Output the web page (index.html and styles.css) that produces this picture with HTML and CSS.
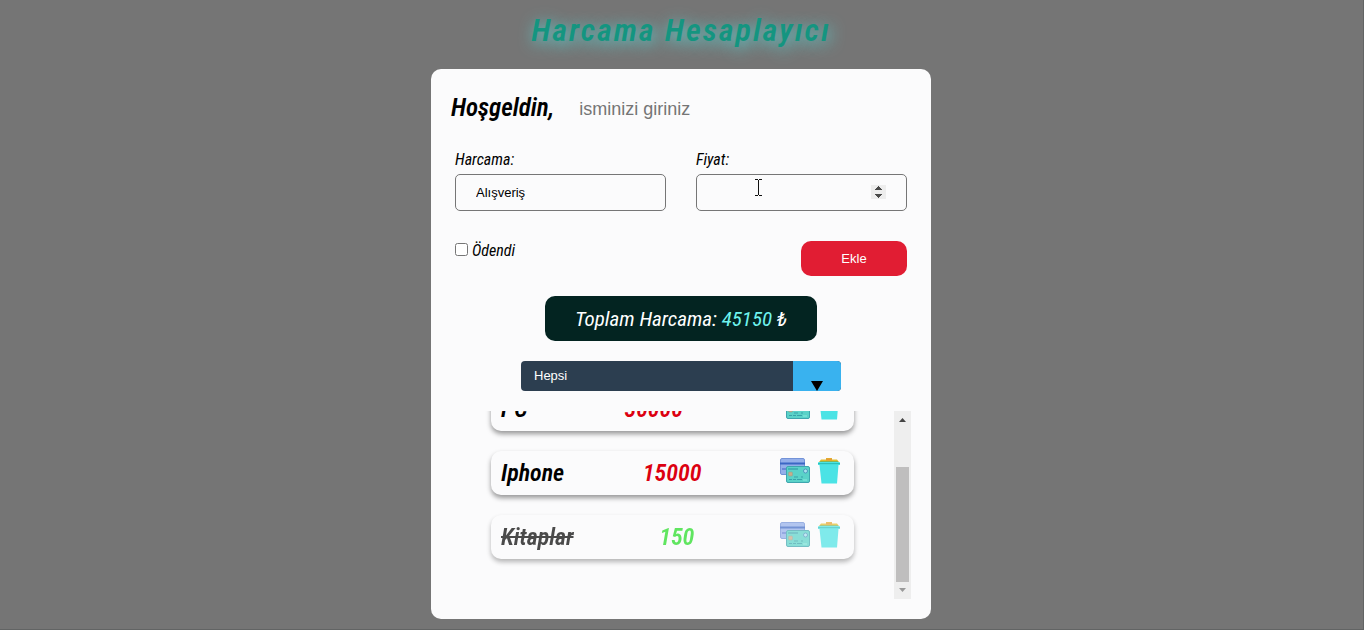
FILE: index.html
```html
<!DOCTYPE html>
<html lang="tr">
<head>
<meta charset="utf-8">
<title>Harcama Hesaplayıcı</title>
<meta name="viewport" content="width=device-width, initial-scale=1">
<link rel="stylesheet" href="styles.css">
</head>
<body>
<svg class="sprite" width="0" height="0" aria-hidden="true">
  <symbol id="cards" viewBox="0 0 30 26">
    <rect x=".5" y=".5" width="24" height="16" rx="1.500" fill="#94afea" stroke="#7393d8"/>
    <path d="M0 4.500h25v2H0z" fill="#3c66c4"/>
    <path d="M2 10h4v2H2z" fill="#6b87d6"/>
    <rect x="6.500" y="8.500" width="23" height="16" rx="1.500" fill="#5ad2c8" stroke="#3fa5ae"/>
    <path d="M8 11h10" stroke="#2f93a2"/>
    <rect x="8.500" y="14" width="4" height="4" rx="1" fill="#c9ab8a" stroke="#8fa596" stroke-width=".6"/>
    <circle cx="25.500" cy="13" r="2" fill="#a9e3ee" stroke="#4489b9" stroke-width=".8"/>
    <path d="M9 21.500h3m1 0h3m1 0h5M14 19h4m3 0h2" stroke="#38a3aa"/>
    <path d="M23 22h4" stroke="#8aeadf"/>
  </symbol>
  <symbol id="bin" viewBox="0 0 22 26">
    <path d="M8 0h6v1.500h5L21 4H1l2-2.500h5z" fill="#e2bd2b"/>
    <path d="M8 .5h6v2H8z" fill="#e59a35"/>
    <path d="M2.500 3h17L21 5H1z" fill="#83b45c"/>
    <path d="M0 5q0-1 1-1h20q1 0 1 1v2h-1.500L19 25.500H3.500L1.500 7H0z" fill="#4be3e5"/>
    <path d="M0 5h22v1.200H0z" fill="#2ac1bb"/>
  </symbol>
</svg>

<h1 class="title">Harcama Hesaplayıcı</h1>

<main class="card">
  <div class="welcome">
    <label class="welcome-text" for="name">Hoşgeldin,</label>
    <input class="name" id="name" type="text" placeholder="isminizi giriniz">
  </div>

  <form class="form">
    <div class="field">
      <label for="expense">Harcama:</label>
      <input class="text-box" id="expense" type="text" value="Alışveriş">
    </div>
    <div class="field">
      <label for="price">Fiyat:</label>
      <input class="text-box" id="price" type="number">
      <svg class="caret" width="7" height="17" viewBox="0 0 7 17" fill="none" stroke="#111" aria-hidden="true"><path d="M0 .5h3M4 .5h3M3.500 1v15M0 16.500h3M4 16.500h3"/></svg>
    </div>
    <div class="paid">
      <input id="paid" type="checkbox">
      <label for="paid">Ödendi</label>
    </div>
    <button class="add" type="button">Ekle</button>
  </form>

  <p class="total">Toplam Harcama: <span class="amount">45150</span> ₺</p>

  <div class="filter">
    <select class="filter-select" aria-label="Filtre">
      <option>Hepsi</option>
      <option>Ödendi</option>
      <option>Ödenmedi</option>
    </select>
  </div>

  <div class="scroller">
    <ul class="list">
      <li class="item">
        <span>PC</span><span class="cost">30000</span>
        <span class="actions">
          <button class="icon" type="button" aria-label="Öde"><svg width="30" height="26"><use href="#cards"/></svg></button>
          <button class="icon" type="button" aria-label="Sil"><svg width="22" height="26"><use href="#bin"/></svg></button>
        </span>
      </li>
      <li class="item">
        <span>Iphone</span><span class="cost">15000</span>
        <span class="actions">
          <button class="icon" type="button" aria-label="Öde"><svg width="30" height="26"><use href="#cards"/></svg></button>
          <button class="icon" type="button" aria-label="Sil"><svg width="22" height="26"><use href="#bin"/></svg></button>
        </span>
      </li>
      <li class="item done">
        <span class="struck">Kitaplar</span><span class="cost">150</span>
        <span class="actions">
          <button class="icon" type="button" aria-label="Öde"><svg width="30" height="26"><use href="#cards"/></svg></button>
          <button class="icon" type="button" aria-label="Sil"><svg width="22" height="26"><use href="#bin"/></svg></button>
        </span>
      </li>
    </ul>
    <div class="bar" aria-hidden="true">
      <svg class="arrow" width="17" height="17" viewBox="0 0 17 17"><path d="M5 11h7L8.500 7z" fill="#444"/></svg>
      <div class="track"><div class="thumb"></div></div>
      <svg class="arrow" width="17" height="17" viewBox="0 0 17 17"><path d="M5 6h7l-3.500 4z" fill="#999"/></svg>
    </div>
  </div>
</main>
</body>
</html>
```
FILE: styles.css
```css
* {
  box-sizing: border-box;
}

body {
  margin: 0;
  min-height: 100vh;
  display: flex;
  flex-direction: column;
  align-items: center;
  padding: 11px 1px 10px 0;
  border-right: 1px solid #626464;
  border-bottom: 1px solid #626464;
  background: #757575;
  color: #000;
  font-family: "Roboto Condensed", "Liberation Sans Narrow", Roboto, sans-serif;
  font-style: italic;
  font-size: 16px;
}

.sprite {
  position: absolute;
}

.title {
  margin: 0 0 19px;
  font-size: 32px;
  line-height: 39px;
  font-weight: 600;
  letter-spacing: 2px;
  color: #149580;
  text-shadow: 2px 3px 15px #5adcdc;
}

.card {
  width: 100%;
  max-width: 500px;
  padding: 20px;
  border-radius: 10px;
  background: #fbfbfc;
  display: flex;
  flex-direction: column;
  align-items: center;
}

.welcome {
  align-self: stretch;
  display: flex;
  align-items: center;
  gap: 25px;
  height: 36px;
}

.welcome-text {
  font-size: 25px;
  font-weight: 600;
}

.name {
  flex: 1;
  min-width: 0;
  border: 0;
  padding: 4px 0 0;
  background: none;
  font: 18px "Liberation Sans", Arial, sans-serif;
}

.name::placeholder {
  color: #757575;
}

.form {
  align-self: stretch;
  display: grid;
  grid-template-columns: 1fr 1fr;
  gap: 30px;
  padding: 25px 4px 20px;
}

.field {
  position: relative;
  display: flex;
  flex-direction: column;
  gap: 4px;
  line-height: 20px;
}

.text-box {
  width: 100%;
  height: 37px;
  padding: 0 20px;
  border: 1px solid #767676;
  border-radius: 5px;
  background: none;
  font: 13px "Liberation Sans", Arial, sans-serif;
}

.text-box::-webkit-inner-spin-button {
  opacity: 1;
  filter: brightness(.8) contrast(3) brightness(.93);
}

.caret {
  position: absolute;
  left: 59px;
  top: 29px;
}

.paid {
  display: flex;
  align-items: center;
  align-self: start;
  gap: 4px;
  line-height: 20px;
}

.paid input {
  margin: 0 0 3px;
}

.add {
  justify-self: end;
  width: 106px;
  height: 35px;
  border: 0;
  border-radius: 10px;
  background: #e11d33;
  color: #fff;
  font: 13px "Liberation Sans", Arial, sans-serif;
}

.total {
  margin: 0 0 20px;
  padding: 11px 30px 9px;
  border-radius: 10px;
  background: #032421;
  color: #fff;
  font-size: 21px;
  line-height: 25px;
}

.amount {
  color: #6ff3ee;
}

.filter {
  position: relative;
  width: 320px;
  height: 30px;
  margin-bottom: 20px;
  border-radius: 4px;
  overflow: hidden;
}

.filter-select {
  appearance: none;
  width: 100%;
  height: 100%;
  padding: 0 13px 2px;
  border: 0;
  background: linear-gradient(#39b2ef, #39b2ef) right / 48px 100% no-repeat #2c3e50;
  color: #fff;
  font: 13px "Liberation Sans", Arial, sans-serif;
}

.filter::after {
  content: "";
  position: absolute;
  right: 18px;
  bottom: 0;
  border: 6px solid transparent;
  border-top: 10px solid #000;
  border-bottom: 0;
  pointer-events: none;
}

.scroller {
  align-self: stretch;
  height: 188px;
  display: flex;
  justify-content: space-between;
}

.list {
  flex: 1;
  margin: 0;
  padding: 0 40px 40px;
  list-style: none;
  overflow: hidden;
  display: flex;
  flex-direction: column;
  justify-content: flex-end;
  gap: 20px;
}

.item {
  flex: none;
  display: flex;
  align-items: center;
  justify-content: space-between;
  height: 44px;
  padding: 0 14px 0 10px;
  border-radius: 10px;
  background: #fbfbfc;
  box-shadow: 0 3px 5px rgba(0, 0, 0, .4);
  font-size: 24px;
  font-weight: 600;
}

.done {
  opacity: .7;
}

.struck {
  text-decoration: line-through;
}

.cost {
  color: #dc0010;
}

.done .cost {
  color: #1fdd1f;
}

.actions {
  display: flex;
  gap: 8px;
  padding-bottom: 5px;
}

.icon {
  display: flex;
  padding: 0;
  border: 0;
  background: none;
}

.bar {
  width: 17px;
  display: flex;
  flex-direction: column;
  background: #eee;
}

.track {
  flex: 1;
  display: flex;
  align-items: flex-end;
  padding: 0 2px;
}

.thumb {
  width: 100%;
  height: 75%;
  background: #bfbebe;
}
```
